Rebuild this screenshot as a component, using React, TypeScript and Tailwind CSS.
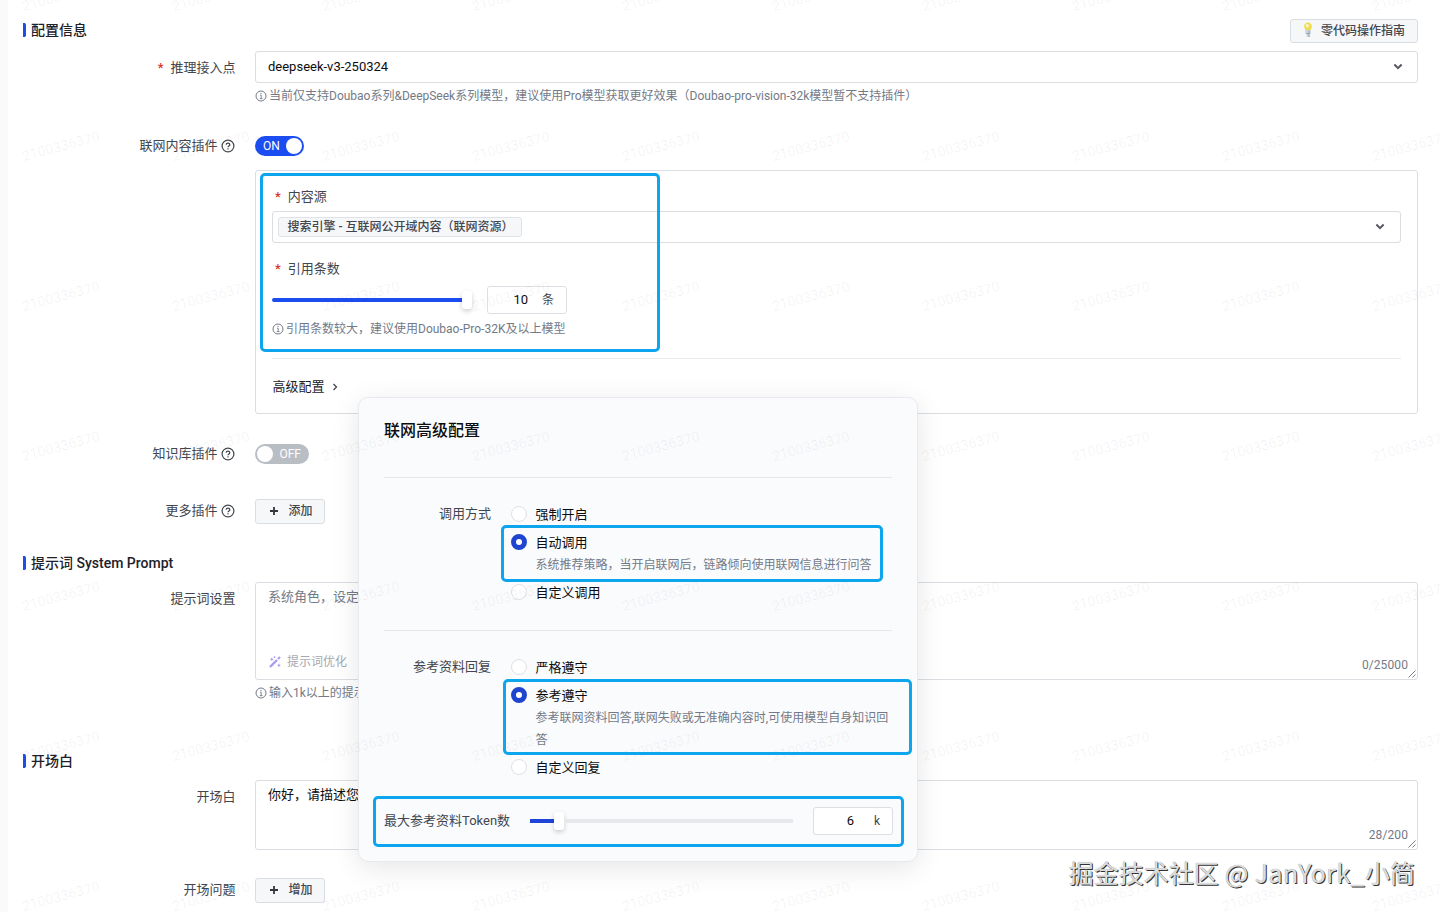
import type { ReactNode } from 'react';

const InfoIcon = () => (
  <svg className="h-3 w-3 shrink-0" viewBox="0 0 12 12" fill="none" stroke="#737a87">
    <circle cx="6" cy="6" r="5" strokeWidth="1" />
    <path d="M5 5.2h1.2v3.3M4.8 8.6h2.7M5.4 3.4h1.2" strokeWidth="0.9" />
  </svg>
);

const HelpIcon = () => (
  <svg className="-ml-px h-[14px] w-[14px] shrink-0" viewBox="0 0 14 14" fill="none" stroke="#42464e" strokeWidth="1.2">
    <circle cx="7" cy="7" r="5.9" />
    <path d="M5.2 5.8c0-1 .8-1.7 1.8-1.7s1.8.6 1.8 1.6c0 1.3-1.8 1.2-1.8 2.6" />
    <path d="M7 9.2v1.2" />
  </svg>
);

const Chevron = () => (
  <svg className="h-2.5 w-2.5 shrink-0" viewBox="0 0 10 10" fill="none" stroke="#55585e" strokeWidth="2">
    <path d="M1.4 2.500l3.6 3.6 3.6-3.600" />
  </svg>
);

const PlusIcon = () => (
  <svg className="h-2 w-2 shrink-0" viewBox="0 0 8 8" stroke="#33373e" strokeWidth="1.8">
    <path d="M4 0v8M0 4h8" />
  </svg>
);

const BulbIcon = () => (
  <svg className="h-4 w-3 shrink-0" viewBox="0 0 12 16">
    <path d="M6 .5C4 .5 2.200 1.800 2.200 4c0 1.600.4 2.800 1 4h5.600c.6-1.200 1-2.400 1-4C9.800 1.800 8 .5 6 .5z" fill="#f0dc50" />
    <path d="M4 2.200h2.500v3H4z" fill="#fdf8c8" />
    <path d="M3.200 8h5.600v3.500l-1.200.8v2.700H4.600v-2.700l-1.400-.8z" fill="#cbd4df" />
    <path d="M7 8.500V15M4.200 11.500h4" stroke="#98a5b6" strokeWidth="1" />
  </svg>
);

const WandIcon = () => (
  <svg className="h-3 w-3 shrink-0" viewBox="0 0 12 12" fill="none" stroke="#a99df0">
    <path d="M1 11L8 4" strokeWidth="2.400" />
    <path d="M9 3l2-2" strokeWidth="2.200" />
    <path d="M2.800 1.800v3M1.300 3.300h3M9.900 7.800v3M8.400 9.300h3M5.500 .4v1.600M4.700 1.200h1.600" strokeWidth="1" />
  </svg>
);

const ResizeGrip = () => (
  <svg className="absolute right-px bottom-px h-2 w-2" viewBox="0 0 8 8" stroke="#6b6e74" strokeWidth="0.9">
    <path d="M.5 7.500L7.500.5M4.500 7.500L7.500 4.500" />
  </svg>
);

const SectionTitle = ({ children }: { children: ReactNode }) => (
  <div className="flex h-5 items-center gap-[5px] text-sm leading-5 font-medium text-[#1d2129]">
    <svg className="h-[14px] w-[3px]" viewBox="0 0 3 14">
      <path d="M0 0h2l1 1.500v11L2 14H0z" fill="#1e4ee8" />
    </svg>
    <h2>{children}</h2>
  </div>
);

const Label = ({ children, required, help }: { children: ReactNode; required?: boolean; help?: boolean }) => (
  <div className="flex h-5 w-[212.500px] shrink-0 items-center justify-end gap-1 text-[13px] leading-5 text-[#42464e]">
    {required && <span className="mr-[3px] font-medium text-[#d8322d]">*</span>}
    <span>{children}</span>
    {help && <span className="pr-px"><HelpIcon /></span>}
  </div>
);

const Hint = ({ children }: { children: ReactNode }) => (
  <div className="flex h-5 items-center gap-0.5 text-xs leading-5 whitespace-nowrap text-[#737a87]">
    <InfoIcon />
    <span>{children}</span>
  </div>
);

const AddButton = ({ children }: { children: ReactNode }) => (
  <button className="flex h-[25px] w-[70px] items-center gap-[10.500px] rounded-[3px] border border-[#dadde2] bg-[#f6f7f9] pb-0.5 pl-[14px] text-xs font-medium text-[#42464e]">
    <PlusIcon />
    {children}
  </button>
);

const NumberBox = ({ value, unit }: { value: string; unit: string }) => (
  <div className="flex h-7 w-20 shrink-0 items-center justify-end rounded-[3px] border border-[#dddfe4] bg-white pr-3 text-[13px]">
    <span className="text-[#0c0d0e]">{value}</span>
    <span className="w-[26px] text-right text-xs text-[#42464e]">{unit}</span>
  </div>
);

const Radio = ({ checked, children }: { checked?: boolean; children: ReactNode }) => (
  <div className="flex h-5 items-center gap-[8.500px] text-[13px] leading-5 text-[#0c0d0e]">
    {checked ? (
      <span className="h-4 w-4 rounded-full border-5 border-[#1f45d0] bg-white" />
    ) : (
      <span className="h-4 w-4 rounded-full border border-[#dfe1e6] bg-white" />
    )}
    <span className="pt-px">{children}</span>
  </div>
);

const Knob = () => <span className="h-[18px] w-[10px] shrink-0 rounded-[3px] bg-white shadow-[0_2px_5px_rgba(0,0,0,0.2)]" />;

const columns = [0, 1, 2, 3, 4, 5, 6, 7, 8, 9];
const rows = [0, 1, 2, 3, 4, 5, 6];

const Watermarks = () => (
  <div className="pointer-events-none absolute -top-[79px] -left-[14px] grid grid-cols-[repeat(10,150px)] grid-rows-[repeat(7,150px)]">
    {rows.map((r) =>
      columns.map((c) => (
        <div key={`${r}-${c}`} className="flex items-center justify-center">
          <span className="-rotate-15 text-sm tracking-[0.1px] text-black/6">2100336370</span>
        </div>
      )),
    )}
  </div>
);

const AdvancedDialog = () => (
  <div className="absolute top-[397px] left-[358px] h-[465px] w-[560px] rounded-[10px] border border-[#e8eaee] bg-[#fafbfd] px-[25px] shadow-[0_6px_28px_rgba(0,0,0,0.1)]">
    <h3 className="mt-[21px] h-6 text-base leading-6 font-medium text-[#0c0d0e]">联网高级配置</h3>
    <div className="mt-[34px] h-px bg-[#e5e7ea]" />
    <div className="mt-[26px] flex gap-5">
      <div className="w-[107px] text-right text-[13px] leading-5 text-[#42464e]">调用方式</div>
      <div className="flex flex-col">
        <Radio>强制开启</Radio>
        <div className="mt-2"><Radio checked>自动调用</Radio></div>
        <p className="mt-[3px] pl-[24.500px] text-xs leading-5 whitespace-nowrap text-[#737a87]">系统推荐策略，当开启联网后，链路倾向使用联网信息进行问答</p>
        <div className="mt-[7px]"><Radio>自定义调用</Radio></div>
      </div>
    </div>
    <div className="mt-[28px] h-px bg-[#e5e7ea]" />
    <div className="mt-[26px] flex gap-5">
      <div className="w-[107px] text-right text-[13px] leading-5 text-[#42464e]">参考资料回复</div>
      <div className="flex flex-col">
        <Radio>严格遵守</Radio>
        <div className="mt-2"><Radio checked>参考遵守</Radio></div>
        <p className="mt-0.5 w-[381px] pl-[24.500px] text-xs leading-[22px] text-[#737a87]">参考联网资料回答,联网失败或无准确内容时,可使用模型自身知识回答</p>
        <div className="mt-1.5"><Radio>自定义回复</Radio></div>
      </div>
    </div>
    <div className="mt-[30px] flex h-7 items-center">
      <span className="w-[146px] shrink-0 text-[13px] leading-5 whitespace-nowrap text-[#42464e]">最大参考资料Token数</span>
      <div className="flex w-[263px] shrink-0 items-center">
        <span className="h-1 w-6 bg-[#1f45d8]" />
        <Knob />
        <span className="h-1 flex-1 bg-[#e6e8eb]" />
      </div>
      <div className="ml-5"><NumberBox value="6" unit="k" /></div>
    </div>
  </div>
);

export default function App() {
  return (
    <div className="relative h-[912px] w-[1440px] overflow-hidden border-l-8 border-[#fafafa] bg-white font-[Roboto,'Noto_Sans_CJK_SC',sans-serif]">
      <main className="flex flex-col pr-[22px] pl-[15px]">
        <div className="mt-[18px] flex h-[33px] items-start justify-between">
          <div className="mt-0.5"><SectionTitle>配置信息</SectionTitle></div>
          <button className="mt-px flex h-6 w-32 items-center gap-[7px] rounded-[3px] border border-[#dadde2] bg-[#f6f7f9] pl-[11px] text-xs font-medium whitespace-nowrap text-[#42464e]">
            <span className="-mt-0.5"><BulbIcon /></span>
            零代码操作指南
          </button>
        </div>

        <div className="flex h-[85px] gap-[19.500px]">
          <div className="pt-[7px]"><Label required>推理接入点</Label></div>
          <div className="flex-1">
            <div className="flex h-8 items-center justify-between rounded-[3px] border border-[#dadde2] pr-[14px] pl-3 text-[13px] text-[#0c0d0e]">
              <span>deepseek-v3-250324</span>
              <Chevron />
            </div>
            <div className="mt-[3px]"><Hint>当前仅支持Doubao系列&amp;DeepSeek系列模型，建议使用Pro模型获取更好效果（Doubao-pro-vision-32k模型暂不支持插件）</Hint></div>
          </div>
        </div>

        <div className="flex h-[34px] gap-[19.500px]">
          <Label help>联网内容插件</Label>
          <div className="flex h-5 w-[49px] items-center justify-between rounded-full bg-[#1c4df0] pr-0.5 pl-2 text-xs text-white">
            ON
            <span className="h-4 w-4 rounded-full bg-white" />
          </div>
        </div>

        <section className="ml-[232px] flex h-[244px] flex-col rounded-[3px] border border-[#dadde2] px-4">
          <div className="mt-4 flex h-5 items-center gap-[7px] pl-[3px] text-[13px] leading-5 text-[#42464e]">
            <span className="font-medium text-[#d8322d]">*</span>内容源
          </div>
          <div className="mt-1 flex h-8 shrink-0 items-center justify-between rounded-[3px] border border-[#dadde2] pr-[15px] pl-[5px]">
            <span className="flex h-5 w-[244px] items-center rounded-[3px] border border-[#dfe2e7] bg-[#f6f7f9] pl-[8.500px] text-xs font-medium whitespace-nowrap text-[#42464e]">搜索引擎 - 互联网公开域内容（联网资源）</span>
            <Chevron />
          </div>
          <div className="mt-4 flex h-5 items-center gap-[7px] pl-[3px] text-[13px] leading-5 text-[#42464e]">
            <span className="font-medium text-[#d8322d]">*</span>引用条数
          </div>
          <div className="mt-[7px] flex h-7 shrink-0 items-center">
            <span className="h-1 w-[190px] rounded-l-sm bg-[#1c4df0]" />
            <Knob />
            <div className="ml-[15px]"><NumberBox value="10" unit="条" /></div>
          </div>
          <div className="mt-[5px]"><Hint>引用条数较大，建议使用Doubao-Pro-32K及以上模型</Hint></div>
          <div className="mt-[19px] h-px shrink-0 bg-[#e8eaed]" />
          <div className="mt-[18px] flex h-5 items-center gap-1.5 pl-[0.500px] text-[13px] leading-5 text-[#1d2129]">
            高级配置
            <span className="-rotate-90"><svg className="h-2 w-2" viewBox="0 0 8 8" fill="none" stroke="#42464e" strokeWidth="1.300"><path d="M1 2.500l3 3 3-3" /></svg></span>
          </div>
        </section>

        <div className="mt-[30px] flex h-[55px] gap-[19.500px]">
          <Label help>知识库插件</Label>
          <div className="flex h-5 w-[54px] items-center justify-between rounded-full bg-[#b9bdc4] pr-2 pl-0.5 text-xs text-white">
            <span className="h-4 w-4 rounded-full bg-white" />
            OFF
          </div>
        </div>

        <div className="flex h-[54px] gap-[19.500px]">
          <div className="pt-0.5"><Label help>更多插件</Label></div>
          <AddButton>添加</AddButton>
        </div>

        <SectionTitle>提示词 System Prompt</SectionTitle>
        <div className="mt-[9px] flex h-[169px] gap-[19.500px]">
          <div className="pt-[7px]"><Label>提示词设置</Label></div>
          <div className="flex-1">
            <div className="relative flex h-[98px] flex-col justify-between rounded-[3px] border border-[#dadde2] px-3 pt-1 pb-[7px]">
              <p className="text-[13px] leading-5 text-[#737a87]">系统角色，设定</p>
              <div className="flex items-center gap-1.5 pl-px text-xs leading-5 text-[#a5a9b0]">
                <WandIcon />提示词优化
              </div>
              <span className="absolute right-[9px] bottom-1 text-xs leading-5 tracking-[0.1px] text-[#737a87]">0/25000</span>
              <ResizeGrip />
            </div>
            <div className="mt-[3px]"><Hint>输入1k以上的提示词</Hint></div>
          </div>
        </div>

        <SectionTitle>开场白</SectionTitle>
        <div className="mt-[9px] flex h-[98px] gap-[19.500px]">
          <div className="pt-[7px]"><Label>开场白</Label></div>
          <div className="relative h-[70px] flex-1 rounded-[3px] border border-[#dadde2] px-3 pt-1 text-[13px] leading-5 text-[#0c0d0e]">
            你好，请描述您
            <span className="absolute right-[9px] bottom-1 text-xs leading-5 tracking-[0.1px] text-[#737a87]">28/200</span>
            <ResizeGrip />
          </div>
        </div>
        <div className="flex gap-[19.500px]">
          <div className="pt-0.5"><Label>开场问题</Label></div>
          <AddButton>增加</AddButton>
        </div>
      </main>

      <div className="absolute inset-y-0 -left-2 w-[1440px]">
        <AdvancedDialog />
        <Watermarks />
        <div className="absolute top-[173px] left-[260px] h-[179px] w-[400px] rounded-[5px] border-3 border-[#0da6ee]" />
        <div className="absolute top-[525px] left-[501px] h-[57px] w-[382px] rounded-[5px] border-3 border-[#0da6ee]" />
        <div className="absolute top-[679px] left-[503px] h-[76px] w-[409px] rounded-[5px] border-3 border-[#0da6ee]" />
        <div className="absolute top-[796px] left-[373px] h-[51px] w-[531px] rounded-[5px] border-3 border-[#0da6ee]" />
        <div className="absolute right-[25px] bottom-[22px] font-['Noto_Sans_CJK_SC',sans-serif] text-[25px] leading-9 whitespace-nowrap text-[#dcdcdc] [text-shadow:1px_1px_0.500px_#333,0_0_1px_#999]">掘金技术社区<span className="tracking-[0.400px]"> @ JanYork_</span>小简</div>
      </div>
    </div>
  );
}
